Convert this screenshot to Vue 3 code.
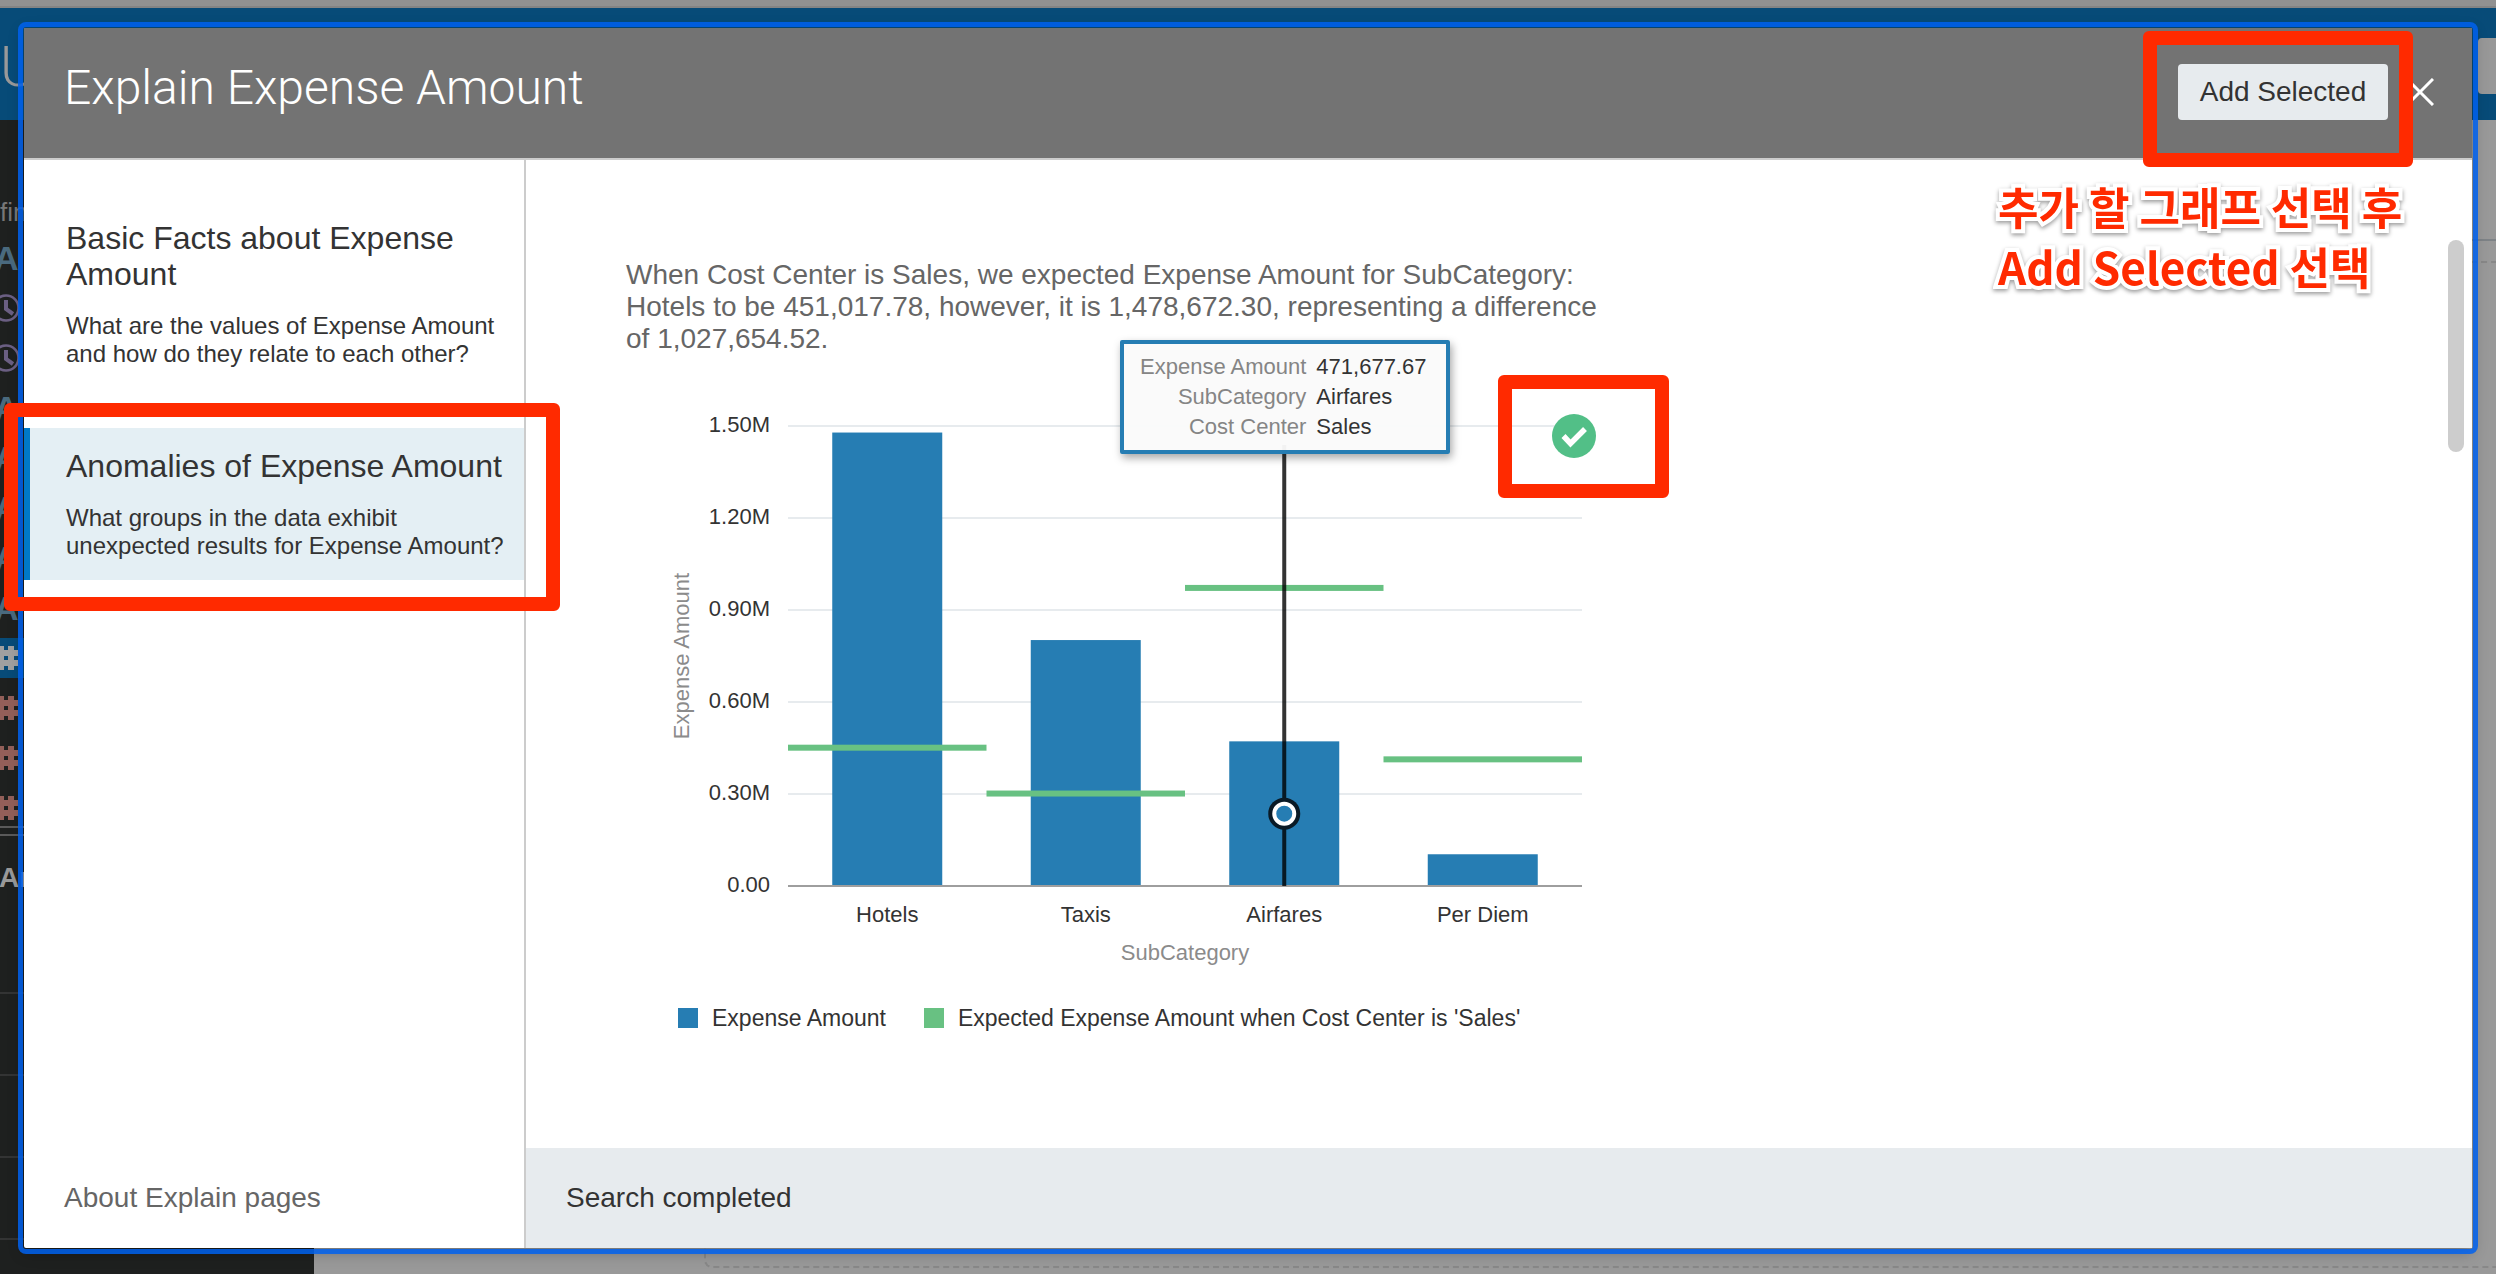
<script setup>
import { computed } from 'vue'

const pages = [
  {
    title: 'Basic Facts about Expense Amount',
    text: 'What are the values of Expense Amount and how do they relate to each other?',
    active: false,
  },
  {
    title: 'Anomalies of Expense Amount',
    text: 'What groups in the data exhibit unexpected results for Expense Amount?',
    active: true,
  },
]

const fields = ['text', 'time', 'time', 'text', 'text', 'text', 'text', 'text', 'picked', 'number', 'number', 'number']

const plot = { left: 162, right: 956, top: 71, bottom: 531, max: 1500000 }
const series = [
  { name: 'Hotels', value: 1478672.3, expected: 451017.78 },
  { name: 'Taxis', value: 802000, expected: 301500 },
  { name: 'Airfares', value: 471677.67, expected: 972000 },
  { name: 'Per Diem', value: 103500, expected: 413000 },
]
const step = (plot.right - plot.left) / series.length
const barWidth = 110
const toY = (v) => plot.bottom - (v / plot.max) * (plot.bottom - plot.top)

const ticks = [
  ['1.50M', 1500000],
  ['1.20M', 1200000],
  ['0.90M', 900000],
  ['0.60M', 600000],
  ['0.30M', 300000],
  ['0.00', 0],
].map(([label, v]) => ({ label, v, y: toY(v) }))

const bars = computed(() =>
  series.map((s, i) => ({
    ...s,
    start: plot.left + i * step,
    center: plot.left + (i + 0.5) * step,
    y: toY(s.value),
    expectedY: toY(s.expected),
  })),
)
const hovered = computed(() => bars.value[2])

const tip = [
  ['Expense Amount', '471,677.67'],
  ['SubCategory', 'Airfares'],
  ['Cost Center', 'Sales'],
]
</script>

<template>
  <div class="app">
    <div class="browser-edge"></div>
    <div class="app-bar">
      <span class="app-name">U</span>
      <span class="app-box"></span>
    </div>
    <div class="workspace">
      <aside class="data-panel">
        <div class="find">fin</div>
        <ul class="fields">
          <li v-for="(f, i) in fields" :key="i" :class="['field', f]">
            <span v-if="f === 'text'">A</span>
            <svg v-else-if="f === 'time'" width="28" height="28" viewBox="0 0 28 28">
              <circle cx="14" cy="14" r="12.5" fill="none" stroke="currentColor" stroke-width="2.6" />
              <path d="M14 6v9l7 5" fill="none" stroke="currentColor" stroke-width="4" />
            </svg>
            <svg v-else width="26" height="24" viewBox="0 0 26 24">
              <path d="M6 0h6v4h4V0h6v4h4v6h-4v4h4v6h-4v4h-6v-4h-4v4H6v-4H0v-6h6v-4H0V4h6zM12 10v4h4v-4z" fill="currentColor" fill-rule="evenodd" />
            </svg>
          </li>
        </ul>
        <div class="double-rule"></div>
        <div class="panel-title">Ar</div>
        <div class="rules"><i></i><i></i><i></i><i></i></div>
      </aside>
      <div class="canvas">
        <div class="canvas-top"></div>
        <div class="drop-zone"></div>
      </div>
    </div>

    <section class="dialog" role="dialog" aria-labelledby="dialog-title">
      <header class="dialog-head">
        <h1 id="dialog-title">Explain Expense Amount</h1>
        <div class="actions">
          <button class="add" type="button">Add Selected</button>
          <button class="close" type="button" aria-label="Close">
            <svg width="28" height="28" viewBox="0 0 28 28">
              <path d="M1 1l26 26M27 1L1 27" stroke="#fff" stroke-width="3" fill="none" />
            </svg>
          </button>
          <div class="mark mark-add"></div>
          <p class="note">추가 할 그래프 선택 후<br />Add Selected 선택</p>
        </div>
      </header>

      <div class="dialog-body">
        <nav class="side">
          <div class="pages">
            <button v-for="p in pages" :key="p.title" type="button" :class="['page', { active: p.active }]">
              <span class="page-title">{{ p.title }}</span>
              <span class="page-text">{{ p.text }}</span>
              <span v-if="p.active" class="mark mark-page"></span>
            </button>
          </div>
          <a class="about" href="#about">About Explain pages</a>
        </nav>

        <main class="main">
          <div class="results">
            <figure class="card">
              <figcaption>
                When Cost Center is Sales, we expected Expense Amount for SubCategory: Hotels to be 451,017.78,
                however, it is 1,478,672.30, representing a difference of 1,027,654.52.
              </figcaption>
              <svg class="chart" viewBox="0 0 980 615" role="img" aria-label="Expense Amount by SubCategory">
                <g v-for="t in ticks" :key="t.label">
                  <rect v-if="t.v" :x="plot.left" :y="t.y - 1" :width="plot.right - plot.left" height="2" class="grid" />
                  <text x="144" :y="t.y + 6" text-anchor="end" class="tick">{{ t.label }}</text>
                </g>
                <rect
                  v-for="b in bars"
                  :key="b.name"
                  :x="b.center - barWidth / 2"
                  :y="b.y"
                  :width="barWidth"
                  :height="plot.bottom - b.y"
                  class="bar"
                />
                <rect :x="plot.left" :y="plot.bottom - 1" :width="plot.right - plot.left" height="2" class="axis" />
                <rect
                  v-for="b in bars"
                  :key="'e' + b.name"
                  :x="b.start"
                  :y="b.expectedY - 3"
                  :width="step"
                  height="6"
                  class="expected"
                />
                <text v-for="b in bars" :key="'l' + b.name" :x="b.center" y="567" text-anchor="middle" class="tick">
                  {{ b.name }}
                </text>
                <text x="559" y="605" text-anchor="middle" class="axis-title">SubCategory</text>
                <text transform="translate(63 301) rotate(-90)" text-anchor="middle" class="axis-title">Expense Amount</text>
                <rect :x="hovered.center - 2" y="90" width="4" :height="plot.bottom - 90" class="cursor" />
                <circle :cx="hovered.center" :cy="(hovered.y + plot.bottom) / 2" r="16" class="dot-outer" />
                <circle :cx="hovered.center" :cy="(hovered.y + plot.bottom) / 2" r="10" class="dot-inner" />
              </svg>
              <dl class="tip">
                <template v-for="[k, v] in tip" :key="k">
                  <dt>{{ k }}</dt>
                  <dd>{{ v }}</dd>
                </template>
              </dl>
              <div class="pick">
                <button type="button" aria-pressed="true" aria-label="Selected">
                  <svg width="44" height="44" viewBox="0 0 44 44">
                    <circle cx="22" cy="22" r="22" fill="#52bf87" />
                    <path d="M11.500 22l7 7.500L33 15" fill="none" stroke="#fff" stroke-width="5.500" />
                  </svg>
                </button>
              </div>
              <ul class="legend">
                <li><i class="key-value"></i>Expense Amount</li>
                <li><i class="key-expected"></i>Expected Expense Amount when Cost Center is 'Sales'</li>
              </ul>
            </figure>
            <div class="thumb"></div>
          </div>
          <footer class="status">Search completed</footer>
        </main>
      </div>
    </section>
  </div>
</template>

<style>
body {
  margin: 0;
  overflow: hidden;
}
</style>

<style scoped>
* {
  box-sizing: border-box;
}
.app {
  position: relative;
  display: flex;
  flex-direction: column;
  height: 100vh;
  overflow: hidden;
  font-family: "Liberation Sans", Arial, sans-serif;
  color: #333;
}
button {
  font: inherit;
  color: inherit;
  border: 0;
  padding: 0;
  background: none;
  cursor: pointer;
}
ul {
  list-style: none;
  margin: 0;
  padding: 0;
}

/* dimmed application behind the dialog */
.browser-edge {
  height: 8px;
  flex: none;
  background: #919191;
  border-bottom: 2px solid #848484;
}
.app-bar {
  display: flex;
  justify-content: space-between;
  height: 112px;
  flex: none;
  background: #074b78;
}
.app-name {
  margin-top: 27px;
  font: 300 56px/64px Roboto, sans-serif;
  color: #999;
}
.app-box {
  width: 18px;
  height: 56px;
  margin-top: 30px;
  border-radius: 4px 0 0 4px;
  background: #989898;
}
.workspace {
  display: flex;
  flex: 1;
  min-height: 0;
}
.data-panel {
  width: 314px;
  background: #1e201f;
  overflow: hidden;
}
.find {
  padding-top: 76px;
  font-size: 26px;
  line-height: 32px;
  color: #777;
}
.fields {
  padding-top: 10px;
}
.field {
  display: flex;
  align-items: center;
  height: 40px;
  margin-bottom: 10px;
}
.text {
  font-size: 34px;
  font-weight: bold;
  line-height: 40px;
  color: #4a6a7e;
}
.text span {
  margin-left: -6px;
}
.time {
  color: #6b5f83;
}
.time svg {
  margin-left: -8px;
}
.picked {
  background: #074b78;
  color: #a0a0a0;
}
.number {
  color: #935f59;
}
.picked svg,
.number svg {
  margin-left: -8px;
}
.double-rule {
  height: 10px;
  margin-top: -12px;
  border-top: 2px solid #5a5a5a;
  border-bottom: 2px solid #5a5a5a;
}
.panel-title {
  margin: 26px 0 0 -1px;
  font-size: 28px;
  font-weight: bold;
  line-height: 32px;
  color: #999;
}
.rules {
  padding-top: 18px;
}
.rules i {
  display: block;
  height: 82px;
  border-bottom: 2px solid #333434;
}
.canvas {
  display: flex;
  flex-direction: column;
  flex: 1;
  background: #999;
}
.canvas-top {
  height: 121px;
  flex: none;
  border-bottom: 2px solid #7e8387;
}
.drop-zone {
  flex: 1;
  margin: 20px -10px 6px 390px;
  border: 2px dashed #888;
  border-radius: 8px;
}

/* dialog */
.dialog {
  position: absolute;
  inset: 28px 24px 26px;
  display: flex;
  flex-direction: column;
  background: #fff;
  border-radius: 2px;
  outline: 5px solid rgba(0, 98, 240, 0.85);
  outline-offset: 1px;
  box-shadow: 0 4px 16px rgba(0, 0, 0, 0.3);
}
.dialog-head {
  display: flex;
  justify-content: space-between;
  align-items: flex-start;
  padding: 0 38px 0 40px;
  height: 132px;
  flex: none;
  background: #737373;
  border-bottom: 2px solid #ccc;
}
h1 {
  margin: 32px 0 0;
  font: 300 48px/56px Roboto, sans-serif;
  color: #fff;
}
.actions {
  position: relative;
  z-index: 2;
  display: flex;
  align-items: center;
  gap: 18px;
  margin-top: 36px;
}
.add {
  width: 210px;
  height: 56px;
  border-radius: 4px;
  background: #e7ebee;
  font-size: 28px;
}
.close {
  display: flex;
}
.mark {
  position: absolute;
  border: 14px solid #ff2a00;
  border-radius: 6px;
  pointer-events: none;
}
.mark-add {
  inset: -33px 21px -47px -35px;
}
.note {
  position: absolute;
  top: 112px;
  left: -180px;
  margin: 0;
  font: bold 44px/60px "Noto Sans CJK KR", sans-serif;
  white-space: nowrap;
  color: #ff2a00;
  -webkit-text-stroke: 8px #fff;
  paint-order: stroke fill;
  stroke-linejoin: round;
  filter: drop-shadow(0 2px 2px rgba(0, 0, 0, 0.4));
}
.dialog-body {
  display: flex;
  flex: 1;
  min-height: 0;
}
.side {
  display: flex;
  flex-direction: column;
  justify-content: space-between;
  width: 502px;
  flex: none;
  border-right: 2px solid #ccc;
}
.pages {
  display: flex;
  flex-direction: column;
  gap: 40px;
  padding-top: 40px;
}
.page {
  position: relative;
  display: flex;
  flex-direction: column;
  gap: 20px;
  padding: 20px 12px 20px 36px;
  border-left: 6px solid transparent;
  text-align: left;
}
.page.active {
  background: #e4eff4;
  border-left-color: #0079c7;
}
.page-title {
  font-size: 32px;
  line-height: 36px;
}
.page-text {
  font-size: 24px;
  line-height: 28px;
}
.mark-page {
  inset: -25px -36px -31px -26px;
}
.about {
  padding: 0 40px;
  font-size: 28px;
  line-height: 100px;
  color: #666;
  text-decoration: none;
}
.main {
  display: flex;
  flex-direction: column;
  flex: 1;
  min-width: 0;
}
.results {
  position: relative;
  flex: 1;
  min-height: 0;
  padding: 99px 100px 0;
  overflow: hidden;
}
.card {
  position: relative;
  width: 980px;
  margin: 0;
}
figcaption {
  font-size: 28px;
  line-height: 32px;
  color: #666;
}
.chart {
  display: block;
  width: 100%;
  font-size: 22px;
}
.grid {
  fill: #e7ebee;
}
.tick {
  fill: #333;
}
.axis-title {
  fill: #8b8b8b;
}
.bar {
  fill: #267db3;
}
.axis {
  fill: #9e9e9e;
}
.expected {
  fill: #68c182;
}
.cursor {
  fill: rgba(0, 0, 0, 0.8);
}
.dot-outer {
  fill: #0a1a26;
}
.dot-inner {
  fill: #267db3;
  stroke: #fff;
  stroke-width: 4px;
}
.tip {
  position: absolute;
  top: 81px;
  left: 494px;
  display: grid;
  grid-template-columns: max-content 1fr;
  column-gap: 10px;
  width: 330px;
  margin: 0;
  padding: 8px 16px;
  border: 4px solid #267db3;
  border-radius: 2px;
  background: rgba(250, 250, 250, 0.96);
  box-shadow: 2px 4px 8px rgba(0, 0, 0, 0.35);
  font-size: 22px;
  line-height: 30px;
}
.tip dt {
  text-align: right;
  color: #858585;
}
.tip dd {
  margin: 0;
}
.pick {
  position: absolute;
  top: 116px;
  left: 872px;
  display: flex;
  width: 171px;
  height: 123px;
  padding: 25px 40px;
  border: 14px solid #ff2a00;
  border-radius: 6px;
}
.pick button {
  width: 44px;
  height: 44px;
}
.legend {
  display: flex;
  gap: 38px;
  margin: 34px 0 0 52px;
  font-size: 23px;
  line-height: 28px;
}
.legend li {
  display: flex;
  align-items: center;
  gap: 14px;
}
.legend i {
  width: 20px;
  height: 20px;
}
.key-value {
  background: #267db3;
}
.key-expected {
  background: #68c182;
}
.thumb {
  position: absolute;
  top: 80px;
  right: 8px;
  width: 16px;
  height: 212px;
  border-radius: 8px;
  background: #cdcdcd;
}
.status {
  padding: 0 40px;
  background: #e7ebee;
  font-size: 28px;
  line-height: 100px;
}
</style>
